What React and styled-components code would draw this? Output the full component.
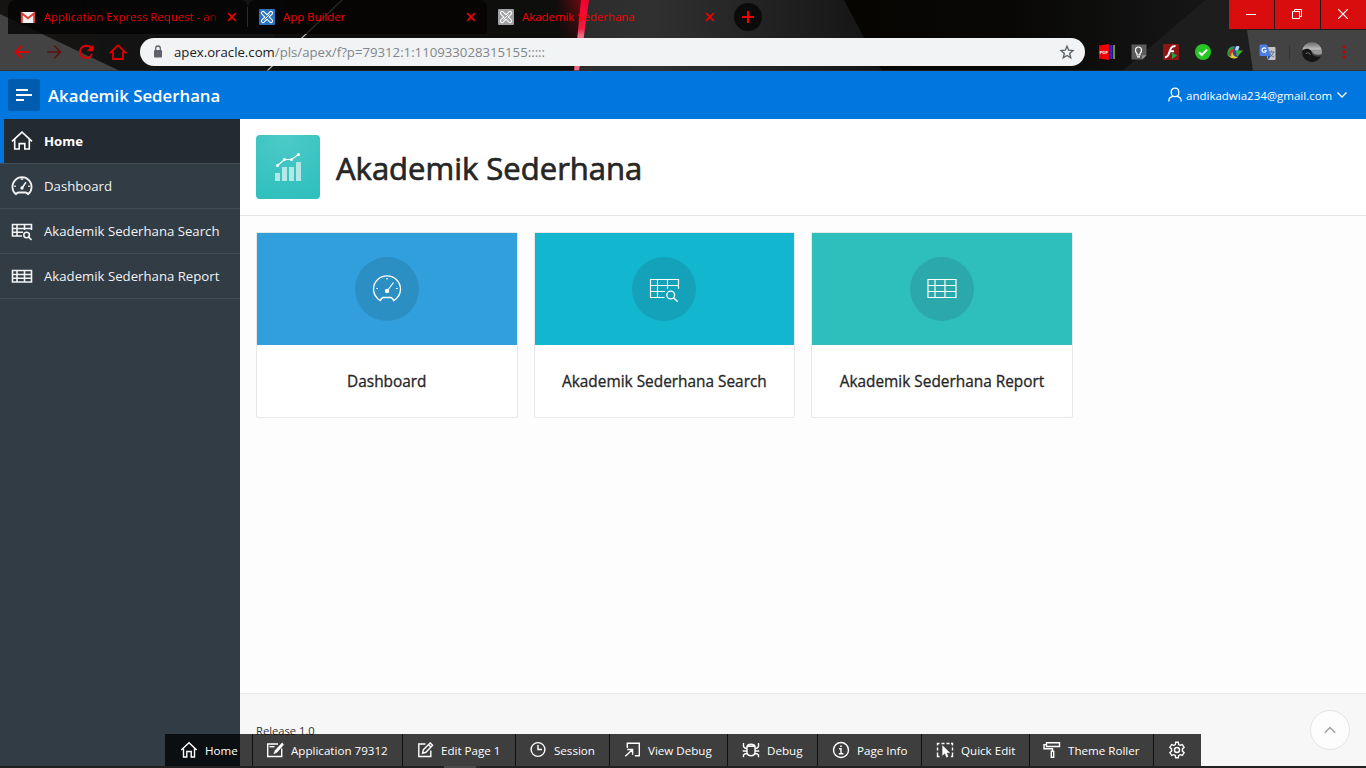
import React from "react";
import styled, { createGlobalStyle } from "styled-components";

const GlobalStyle = createGlobalStyle`
  *, *::before, *::after { box-sizing: border-box; }
  html, body { margin: 0; padding: 0; overflow: hidden; background: #fdfdfd; }
  body { font-family: "Segoe UI", "Open Sans", "Noto Sans", sans-serif; color: #262626; }
  svg { display: block; flex: none; }
`;

const Screen = styled.div`
  position: relative;
  width: 1366px;
  height: 768px;
  display: flex;
  flex-direction: column;
  overflow: hidden;
`;

/* ---------- browser chrome ---------- */

const Chrome = styled.div`
  position: relative;
  z-index: 0;
  height: 71px;
  flex: none;
  display: flex;
  flex-direction: column;
  background: #111;
`;

const Backdrop = styled.svg`
  position: absolute;
  inset: 0;
  z-index: -1;
`;

const TabStrip = styled.div`
  height: 34px;
  display: flex;
  padding-left: 8px;
`;

const Tab = styled.div`
  width: ${(p) => p.$width}px;
  height: 34px;
  display: flex;
  align-items: center;
  padding: 0 11px 0 ${(p) => p.$inset ?? 12}px;
  border-radius: 8px 8px 0 0;
  background: ${(p) => (p.$active ? "transparent" : "rgba(4, 3, 2, 0.78)")};
`;

const TabTitle = styled.span`
  flex: 1;
  margin-left: 8px;
  overflow: hidden;
  white-space: nowrap;
  font-size: 11.4px;
  line-height: 16px;
  color: #f40000;
  mask-image: ${(p) => (p.$fade ? "linear-gradient(90deg, #000 87%, transparent 99%)" : "none")};
`;

const TabDivider = styled.i`
  width: 1px;
  height: 20px;
  margin: 7px 0 0 -1px;
  background: #7a0b0b;
`;

const NewTab = styled.div`
  width: 28px;
  height: 28px;
  margin: 3px 0 0 8px;
  border-radius: 50%;
  background: #0b0b0b;
  display: grid;
  place-items: center;
`;

const WindowButtons = styled.div`
  margin-left: auto;
  display: flex;
  gap: 1px;
`;

const WindowButton = styled.div`
  width: 45px;
  height: 29px;
  padding: 0 2px 1px 0;
  background: #d90d0d;
  display: grid;
  place-items: center;
`;

const BrowserBar = styled.div`
  height: 37px;
  padding: 0 0 1px 6px;
  display: flex;
  align-items: center;
`;

const BarSlot = styled.div`
  width: 32px;
  height: 32px;
  display: grid;
  place-items: center;
`;

const BarDivider = styled.i`
  width: 1px;
  height: 15px;
  margin: 0 6px;
  background: #6b1c1c;
`;

const AddressBox = styled.div`
  width: 945px;
  height: 28px;
  margin: 0 6px;
  padding: 0 10px 0 12px;
  border-radius: 14px;
  background: #f1f3f4;
  display: flex;
  align-items: center;
`;

const Address = styled.span`
  flex: 1;
  margin-left: 10px;
  font-size: 13.2px;
  line-height: 20px;
  color: #80868b;
  b { font-weight: 400; color: #202124; }
`;

/* ---------- application header ---------- */

const AppHeader = styled.header`
  height: 48px;
  flex: none;
  display: flex;
  align-items: center;
  padding: 0 18px 0 8px;
  background: #0076df;
  color: #fff;
`;

const MenuButton = styled.div`
  width: 32px;
  height: 32px;
  border-radius: 2px;
  background: #005cae;
  display: grid;
  place-items: center;
`;

const AppName = styled.div`
  margin-left: 8px;
  padding-top: 1px;
  font-size: 16.8px;
  font-weight: 600;
  line-height: 24px;
  white-space: nowrap;
`;

const UserMenu = styled.div`
  margin-left: auto;
  display: flex;
  align-items: center;
  font-size: 11.5px;
  line-height: 16px;
  span { width: 153px; padding: 1px 0 0 3px; white-space: nowrap; }
`;

/* ---------- body ---------- */

const Body = styled.div`
  flex: 1;
  min-height: 0;
  display: flex;
`;

const SideNav = styled.nav`
  width: 240px;
  flex: none;
  background: #323c45;
`;

const NavItem = styled.div`
  height: 45px;
  display: flex;
  align-items: center;
  gap: 10px;
  padding-left: 10px;
  border-bottom: 1px solid #434d56;
  background: ${(p) => (p.$current ? "#232a31" : "transparent")};
  box-shadow: ${(p) => (p.$current ? "inset 4px 0 0 #0076df" : "none")};
  color: ${(p) => (p.$current ? "#fff" : "#f2f3f4")};
  font-size: 13.2px;
  font-weight: ${(p) => (p.$current ? 700 : 400)};
  line-height: 20px;
  white-space: nowrap;
`;

const Main = styled.main`
  flex: 1;
  display: flex;
  flex-direction: column;
  background: #fdfdfd;
`;

const Hero = styled.section`
  height: 97px;
  display: flex;
  align-items: flex-start;
  gap: 16px;
  padding: 16px;
  background: #fff;
  border-bottom: 1px solid #e4e4e4;
`;

const HeroIcon = styled.div`
  width: 64px;
  height: 64px;
  border-radius: 4px;
  background: radial-gradient(circle at 45% 0, #4dcac8, #2dbfbc 100%);
  display: grid;
  place-items: center;
`;

const HeroTitle = styled.h1`
  margin: 11px 0 0;
  font-size: 31px;
  font-weight: 400;
  line-height: 44px;
  white-space: nowrap;
  color: #262626;
  -webkit-text-stroke: 0.7px #262626;
`;

const Cards = styled.section`
  flex: 1;
  display: grid;
  grid-template-columns: repeat(3, 261.6px);
  gap: 16px;
  align-content: start;
  padding: 16px;
`;

const Card = styled.article`
  height: 186px;
  border: 1px solid #e8e8e8;
  border-radius: 2px;
  background: #fff;
`;

const CardTop = styled.div`
  height: 112px;
  display: grid;
  place-items: center;
  background: ${(p) => p.$color};
`;

const CardDisc = styled.div`
  width: 64px;
  height: 64px;
  border-radius: 50%;
  background: rgba(31, 64, 83, 0.17);
  display: grid;
  place-items: center;
`;

const CardTitle = styled.h3`
  margin: 25px 0 0;
  font-size: 15.4px;
  font-weight: 400;
  line-height: 24px;
  text-align: center;
  white-space: nowrap;
  -webkit-text-stroke: 0.3px #262626;
`;

const Footer = styled.footer`
  height: 75px;
  padding: 29px 16px 0;
  border-top: 1px solid #e6e6e6;
  background: #f7f7f7;
  font-size: 11.2px;
  line-height: 16px;
  color: #333;
`;

const BackToTop = styled.div`
  position: absolute;
  left: 1310px;
  top: 710px;
  width: 40px;
  height: 40px;
  border: 1px solid #e4e4e4;
  border-radius: 50%;
  background: #fdfdfd;
  display: grid;
  place-items: center;
`;

const DevToolbar = styled.div`
  position: absolute;
  left: 165px;
  top: 734px;
  height: 32px;
  display: flex;
  background: rgba(0, 0, 0, 0.75);
`;

const DevItem = styled.div`
  width: ${(p) => p.$width}px;
  height: 32px;
  display: flex;
  align-items: center;
  padding-left: ${(p) => p.$inset ?? 12}px;
  gap: 6px;
  border-right: 1px solid #101010;
  color: #fff;
  font-size: 11.6px;
  line-height: 16px;
  white-space: nowrap;
  &:last-child { border-right: 0; }
  span { padding-top: 1px; }
`;

const TaskbarEdge = styled.div`
  position: absolute;
  left: 0;
  bottom: 0;
  width: 1366px;
  height: 2px;
  background: linear-gradient(90deg, #202020 444px, #4a4a4a 444px 476px, #2c2c2c 476px 480px, #202020 480px);
`;

/* ---------- icons ---------- */

const NavIcon = ({ children }) => (
  <svg width="24" height="24" viewBox="0 0 24 24" fill="none" stroke="currentColor" strokeWidth="1.600">
    {children}
  </svg>
);

const CardIcon = ({ children }) => (
  <svg width="32" height="32" viewBox="0 0 32 32" fill="none" stroke="#fff" strokeWidth="1.150">
    {children}
  </svg>
);

const navGlyphs = {
  home: <path d="M2 12.300 12 3.200l10 9.100M4.700 10.500v9.500h4.500v-5.400h5.600v5.400h4.500v-9.500" />,
  gauge: (
    <>
      <path d="M6 20.300A9.600 9.600 0 1 1 18 20.300Q17 18.600 15.500 18.500h-7Q7 18.600 6 20.300z" strokeWidth="1.800" strokeLinejoin="round" />
      <path d="M12.200 13.800 16 8.300M10.800 5h2.400M4.300 12.200h1.500M18.200 12.200h1.500" />
      <circle cx="12" cy="14" r="1.700" fill="currentColor" stroke="none" />
    </>
  ),
  search: (
    <>
      <path d="M12 17H2.500V5.500h19v5.500M2.500 9.500h19M2.500 13.300h10.500M7 5.500V17M14.500 5.500V11" />
      <circle cx="16.600" cy="16" r="2.800" />
      <path d="m18.600 18 3 3" />
    </>
  ),
  table: <path d="M2.500 6.500h19v11.500h-19zM2.500 10.500h19M2.500 14.300h19M7 6.500V18M14.500 6.500V18" />,
};

const cardGlyphs = {
  gauge: (
    <>
      <path d="M9.300 27.700C4.500 24.500 2.500 21 2.500 16.300A13.500 13.500 0 0 1 29.500 16.300C29.500 21 27.500 24.500 22.700 27.700Q21.800 25 20 24.500H12Q10.200 25 9.300 27.700z" strokeWidth="1.300" strokeLinejoin="round" />
      <path d="M16.500 17.500 22.500 9.500M15 5.700h2M5.300 15.500H7M25 15.500h1.700" />
      <circle cx="16" cy="18" r="2.200" fill="#fff" stroke="none" />
    </>
  ),
  search: (
    <>
      <path d="M16.500 24.500h-14v-18h28v9.300M2.500 12.500h28M2.500 18.500h14.500M9.500 6.500v18M19.500 6.500v9.300" />
      <circle cx="22.700" cy="22" r="3.900" strokeWidth="1.300" />
      <path d="m25.500 24.800 4.300 4" strokeWidth="1.400" />
    </>
  ),
  table: <path d="M2 6.500h28v18H2zM2 12.500h28M2 18.500h28M9 6.500v18M19 6.500v18" />,
};

const CloseIcon = () => (
  <svg width="10" height="10" viewBox="0 0 10 10" stroke="#f00000" strokeWidth="1.700">
    <path d="m1.200 1.200 7.600 7.600M8.800 1.200 1.200 8.800" />
  </svg>
);

const GmailIcon = () => (
  <svg width="16" height="16" viewBox="0 0 16 16">
    <path d="M1 3h14v11H1z" fill="#f1f1f1" />
    <path d="M1.800 14V4.300L8 9.200l6.200-4.900V14" fill="none" stroke="#d64035" strokeWidth="2" />
  </svg>
);

const ApexIcon = ({ color }) => (
  <svg width="16" height="16" viewBox="0 0 16 16">
    <rect width="16" height="16" rx="1" fill={color} />
    <path d="m4 4 8 8M12 4l-8 8" stroke="#fff" strokeWidth="4.200" strokeLinecap="round" />
    <path d="m4 4 8 8M12 4l-8 8" stroke={color} strokeWidth="2" strokeLinecap="round" />
    <path d="m5.500 10.500 5-5" stroke="#fff" strokeWidth="1" />
  </svg>
);

const ChromeBackdrop = () => (
  <Backdrop width="1366" height="71" viewBox="0 0 1366 71">
    <defs>
      <linearGradient id="glow" x1="0" x2="1" y1="0" y2="0">
        <stop offset="0" stopColor="#a00010" stopOpacity="0" />
        <stop offset="1" stopColor="#a80d14" stopOpacity="0.7" />
      </linearGradient>
      <linearGradient id="glowFade" x1="0" x2="0" y1="0" y2="1">
        <stop offset="0" stopColor="#fff" />
        <stop offset="0.600" stopColor="#222" />
        <stop offset="1" stopColor="#000" />
      </linearGradient>
      <mask id="glowMask"><rect x="540" width="60" height="71" fill="url(#glowFade)" /></mask>
      <linearGradient id="slate" x1="0" x2="1" y1="0" y2="0">
        <stop offset="0" stopColor="#2c2c2c" />
        <stop offset="0.250" stopColor="#303030" />
        <stop offset="1" stopColor="#141414" />
      </linearGradient>
      <linearGradient id="shade" x1="0" x2="1" y1="0" y2="0">
        <stop offset="0" stopColor="#070502" />
        <stop offset="0.450" stopColor="#080706" />
        <stop offset="1" stopColor="#161616" />
      </linearGradient>
      <linearGradient id="beam" x1="0" x2="0" y1="0" y2="1">
        <stop offset="0" stopColor="#f4002d" />
        <stop offset="0.400" stopColor="#f01c40" />
        <stop offset="0.500" stopColor="#f16a80" />
        <stop offset="1" stopColor="#f16a80" />
      </linearGradient>
    </defs>
    <path d="M0 0h1366v71H0z" fill="#0e0e0d" />
    <path d="M0 0h80l40 71H0z" fill="#151413" />
    <path d="M85 0h200l-20 71H108z" fill="#141313" />
    <path d="M0 14 120 71H0z" fill="#434343" />
    <path d="M588 0h256l38 71H576z" fill="url(#slate)" />
    <path d="M844 0h361l-83 71H882z" fill="url(#shade)" />
    <path d="M1205 0h161v71h-244z" fill="#1d1d1d" />
    <path d="M1247 30h119v41h-113z" fill="#434343" />
    <path d="m342 0-75 71" stroke="#b5b5b5" strokeWidth="1.200" />
    <path d="M556 0h28l-7 71h-16z" fill="url(#glow)" mask="url(#glowMask)" />
    <path d="M581 0h8l-10 71h-5z" fill="url(#beam)" />
    <path d="M0 70.500h1366" stroke="#2a2a2a" opacity="0.600" />
  </Backdrop>
);

const ExtensionIcons = () => (
  <>
    <BarSlot>
      <svg width="16" height="16" viewBox="0 0 16 16">
        <path d="M0 1.500 10 0v16L0 14.500z" fill="#f40000" />
        <path d="M11 1h2.500v14H11z" fill="#3320d8" />
        <path d="M14 1h2v14h-2z" fill="#6b8f24" />
        <text x="0.700" y="9.800" fontSize="4.200" fontWeight="700" fill="#fff" fontFamily="Liberation Sans, sans-serif">PDF</text>
      </svg>
    </BarSlot>
    <BarSlot>
      <svg width="16" height="16" viewBox="0 0 16 16">
        <path d="M.5.500h15v10.700l-4.300 4.300H.5z" fill="#5c5c5c" />
        <path d="M11.200 15.500v-4.300h4.300z" fill="#999" />
        <path d="M6 9.500C3.300 7 4.400 3 7.500 3S11.700 7 9 9.500V11H6zM6 12.800h3" fill="none" stroke="#fff" strokeWidth="1.200" />
      </svg>
    </BarSlot>
    <BarSlot>
      <svg width="16" height="16" viewBox="0 0 16 16">
        <rect width="16" height="16" rx="1" fill="#8f1414" />
        <path d="M12.500 2C8 2 7.500 5 6.300 8.500 5.400 11.500 4.700 13 2 13.400M6 7.300h5" fill="none" stroke="#fff" strokeWidth="2.100" />
        <path d="m9 8.500 5 3-5 3.500z" fill="#23a34c" />
      </svg>
    </BarSlot>
    <BarSlot>
      <svg width="16" height="16" viewBox="0 0 16 16">
        <circle cx="8" cy="8" r="8" fill="#26c425" />
        <path d="m4 8.200 2.800 2.800L12 5.600" fill="none" stroke="#fff" strokeWidth="2" />
      </svg>
    </BarSlot>
    <BarSlot>
      <svg width="16" height="16" viewBox="0 0 16 16">
        <circle cx="7" cy="8" r="6" fill="#2b4f9c" />
        <path d="M1 12.500C-1 7 2 2.500 7 2.500l-1 3C3.500 6 3 9 4.500 11z" fill="#2e9a3b" />
        <path d="M2.500 11.500C1.500 8 3.500 5 7 4.500L6.500 7C5 8 5 10 6.500 11.500z" fill="#d8302a" />
        <path d="M1.500 11.500c2 3.500 6.500 4 9.500 1.500-3 0-5.500-2-5.500-5C4 9 4.500 11 4 12.500z" fill="#e9c52c" />
        <path d="M9 2.500c1.500-1 3-.5 3.500.5l-2 4-2.500-1z" fill="#b8d9ef" />
        <path d="M8.500 6.500h7.500l-6 6.500-.5-3.500z" fill="#43b02d" />
      </svg>
    </BarSlot>
    <BarSlot>
      <svg width="17" height="17" viewBox="0 0 17 17">
        <path d="M5 3h10.500q1 0 1 1v11q0 1-1 1H9z" fill="#c6c6c6" />
        <path d="M9.500 8h6M12.500 6.500V8M14.500 8c-.5 2.500-2 4-4 5M11 9c.6 2 2 3.300 4 4.200" stroke="#5f7991" fill="none" />
        <path d="M1.500.5H8l4 11.500H1.500q-1 0-1-1v-9.500q0-1 1-1z" fill="#4a7fe5" />
        <path d="m8.500 12 3 0-2 4z" fill="#2b53b5" />
        <path d="M7 4.800a2.200 2.200 0 1 0 .3 2H5.300" fill="none" stroke="#fff" strokeWidth="1.100" />
      </svg>
    </BarSlot>
  </>
);

const Avatar = () => (
  <svg width="20" height="20" viewBox="0 0 20 20">
    <defs>
      <clipPath id="round"><circle cx="10" cy="10" r="10" /></clipPath>
      <linearGradient id="sky" x1="0" x2="0" y1="0" y2="1">
        <stop offset="0" stopColor="#666" />
        <stop offset="0.350" stopColor="#bbb" />
        <stop offset="0.550" stopColor="#555" />
        <stop offset="1" stopColor="#111" />
      </linearGradient>
    </defs>
    <g clipPath="url(#round)">
      <path d="M0 0h20v20H0z" fill="url(#sky)" />
      <path d="M0 8.500c6-4 10-.5 10 3 1 3.500 5 3.500 9 3l-4 6H0z" fill="#151515" />
      <path d="M10 9.500c3-1.500 7-1 10-1.500v4c-4 1.500-8 1-10-2.500z" fill="#999" />
      <path d="M3.500 12c1.500-2 4-1.500 5 1" stroke="#777" fill="none" />
    </g>
  </svg>
);

const DevIcon = ({ children }) => (
  <svg width="20" height="20" viewBox="0 0 20 20" fill="none" stroke="currentColor" strokeWidth="1.400">
    {children}
  </svg>
);

const devIcons = {
  home: <path d="m2.300 10 7.700-7.300 7.700 7.300M4.500 8.700V17h3.300v-5.500h4.400V17h3.300V8.700" />,
  application: (
    <>
      <path d="M13 4H2.700v12.500h14V8.500" />
      <path d="m17.300 2.700-7 7.600-1.500 3.500 3.300-1.600 6.600-7.600" fill="currentColor" strokeWidth="0.600" />
      <path d="M4.500 6.700h5" />
    </>
  ),
  edit: (
    <>
      <path d="M10.500 4H3.800v12.500h12V10.500" />
      <path d="m7.600 13.200.8-3.500 6.800-6.800 2.400 2.400-6.700 7zM13.500 4.700l2.400 2.400" />
    </>
  ),
  session: (
    <>
      <circle cx="10" cy="9.500" r="6.900" />
      <path d="M10 5v4.500h4" />
    </>
  ),
  view: <path d="M5.300 8V3.300h12v12.400h-4.500M3.300 16.200l7-6.500M5.300 9.500h5.300v5.300" />,
  bug: (
    <>
      <path d="M6 6.300c1-2.700 7-2.700 8 0v6.500c-1 4-7 4-8 0zM6 6.300h8" />
      <path d="M6 8.200H4L2.500 6.500V3M14 8.200h2l1.500-1.700V3M6 11H1.700M14 11h4.300M6 13.700H4L2.500 15v2.300M14 13.700h2l1.500 1.300v2.300" />
    </>
  ),
  info: (
    <>
      <circle cx="10" cy="10" r="7.500" />
      <path d="M8 8.700h2v4.800M7.800 13.700h4.600M9.200 6.300h1.500" />
    </>
  ),
  quick: (
    <>
      <path d="M2.500 5.500v-2h2M6.500 3.500h3M11.500 3.500h3M16 3.500h1.500v2M17.500 7.500v3M17.500 12.500v4H16M2.500 7.500v3M2.500 12.500v4h2" />
      <path d="M7.500 5.500v10l2.400-2.200 1.600 4 1.700-.7-1.600-3.900h3.200z" fill="currentColor" strokeWidth="0.300" />
    </>
  ),
  roller: (
    <>
      <path d="M4.500 2.700h13v3.800h-13zM4.500 4.600H2v4.200h8.500v2.500" />
      <path d="M9.300 11.300h2.400v6H9.300z" />
    </>
  ),
  gear: (
    <>
      <path d="m8.700 2.300-.4 2.200-1.500.8-2.100-.8-1.800 2.900 1.700 1.500v2.200l-1.700 1.500 1.800 2.900 2.100-.8 1.500.8.4 2.200h2.600l.4-2.200 1.500-.8 2.100.8 1.800-2.900-1.700-1.500V8.900l1.700-1.500-1.800-2.900-2.100.8-1.500-.8-.4-2.200z" />
      <circle cx="10" cy="10" r="2.500" />
    </>
  ),
};

const devItems = [
  { icon: "home", label: "Home", width: 88, inset: 14 },
  { icon: "application", label: "Application 79312", width: 150 },
  { icon: "edit", label: "Edit Page 1", width: 113 },
  { icon: "session", label: "Session", width: 94 },
  { icon: "view", label: "View Debug", width: 118 },
  { icon: "bug", label: "Debug", width: 90, inset: 13 },
  { icon: "info", label: "Page Info", width: 104, inset: 13 },
  { icon: "quick", label: "Quick Edit", width: 108, inset: 13 },
  { icon: "roller", label: "Theme Roller", width: 124 },
  { icon: "gear", label: "", width: 47, inset: 13 },
];

const navItems = [
  { label: "Home", glyph: "home", current: true },
  { label: "Dashboard", glyph: "gauge" },
  { label: "Akademik Sederhana Search", glyph: "search" },
  { label: "Akademik Sederhana Report", glyph: "table" },
];

const cards = [
  { label: "Dashboard", color: "#309fdb", glyph: "gauge" },
  { label: "Akademik Sederhana Search", color: "#13b6cf", glyph: "search" },
  { label: "Akademik Sederhana Report", color: "#2ebfbc", glyph: "table" },
];

export default function App() {
  return (
    <Screen>
      <GlobalStyle />
      <Chrome>
        <ChromeBackdrop />
        <TabStrip>
          <Tab $width={240}>
            <GmailIcon />
            <TabTitle $fade>Application Express Request - an</TabTitle>
            <CloseIcon />
          </Tab>
          <TabDivider />
          <Tab $width={239} $inset={11}>
            <ApexIcon color="#2b74bd" />
            <TabTitle>App Builder</TabTitle>
            <CloseIcon />
          </Tab>
          <Tab $width={239} $inset={11} $active>
            <ApexIcon color="#9da1a4" />
            <TabTitle>Akademik Sederhana</TabTitle>
            <CloseIcon />
          </Tab>
          <NewTab>
            <svg width="12" height="12" viewBox="0 0 12 12" stroke="#f40000" strokeWidth="2"><path d="M6 0v12M0 6h12" /></svg>
          </NewTab>
          <WindowButtons>
            <WindowButton>
              <svg width="10" height="10" viewBox="0 0 10 10" stroke="#fff"><path d="M0 5.500h10" /></svg>
            </WindowButton>
            <WindowButton>
              <svg width="10" height="10" viewBox="0 0 10 10" stroke="#fff" fill="none"><path d="M.5 2.500h7v7h-7zM2.500 2.500v-2h7v7h-2" /></svg>
            </WindowButton>
            <WindowButton>
              <svg width="10" height="10" viewBox="0 0 10 10" stroke="#fff" strokeWidth="1.200"><path d="m0 0 10 10M10 0 0 10" /></svg>
            </WindowButton>
          </WindowButtons>
        </TabStrip>
        <BrowserBar>
          <BarSlot>
            <svg width="16" height="16" viewBox="0 0 16 16" fill="none" stroke="#d00" strokeWidth="1.800"><path d="M15 8H2M8 1.500 1.500 8 8 14.500" /></svg>
          </BarSlot>
          <BarSlot>
            <svg width="16" height="16" viewBox="0 0 16 16" fill="none" stroke="#5e1010" strokeWidth="1.600"><path d="M1 8h13M8 1.500 14.500 8 8 14.500" /></svg>
          </BarSlot>
          <BarSlot>
            <svg width="16" height="16" viewBox="0 0 16 16" fill="none" stroke="#d00" strokeWidth="2"><path d="M13.200 4.200A6.200 6.200 0 1 0 14 10" /><path d="M15 .8v6.400H8.600z" fill="#d00" stroke="none" /></svg>
          </BarSlot>
          <BarSlot>
            <svg width="18" height="18" viewBox="0 0 18 18" fill="none" stroke="#d00" strokeWidth="1.800"><path d="M4 16V9.300H1.800L9 2.200l7.200 7.100H14V16z" /></svg>
          </BarSlot>
          <AddressBox>
            <svg width="12" height="14" viewBox="0 0 12 14"><rect x="2" y="5" width="8" height="7.500" rx="1" fill="#5f6368" /><path d="M3.700 5V3.300a2.300 2.300 0 0 1 4.600 0V5" fill="none" stroke="#5f6368" strokeWidth="1.300" /></svg>
            <Address><b>apex.oracle.com</b>/pls/apex/f?p=79312:1:110933028315155:::::</Address>
            <svg width="16" height="16" viewBox="0 0 16 16" fill="none" stroke="#5f6368" strokeWidth="1.400"><path d="m8 2.200 1.700 4 4.300.4-3.300 2.900 1 4.300L8 11.500l-3.700 2.300 1-4.300L2 6.600l4.300-.4z" /></svg>
          </AddressBox>
          <ExtensionIcons />
          <BarDivider />
          <BarSlot><Avatar /></BarSlot>
          <BarSlot>
            <svg width="4" height="14" viewBox="0 0 4 14" fill="#c40000"><circle cx="2" cy="2" r="1.500" /><circle cx="2" cy="7" r="1.500" /><circle cx="2" cy="12" r="1.500" /></svg>
          </BarSlot>
        </BrowserBar>
      </Chrome>

      <AppHeader>
        <MenuButton>
          <svg width="16" height="12" viewBox="0 0 16 12" stroke="#fff" strokeWidth="2"><path d="M0 1h12M0 6h16M0 11h8" /></svg>
        </MenuButton>
        <AppName>Akademik Sederhana</AppName>
        <UserMenu>
          <svg width="16" height="16" viewBox="0 0 16 16" fill="none" stroke="#fff" strokeWidth="1.300"><path d="M4.200 5.200C4.200 2.600 5.700 1.200 8 1.200s3.800 1.400 3.800 4S10.300 9.700 8 9.700 4.200 7.800 4.200 5.200zM6 9.200l-3.200 1.600q-1 .5-1 3.700M10 9.200l3.200 1.600q1 .5 1 3.700" /></svg>
          <span>andikadwia234@gmail.com</span>
          <svg width="12" height="12" viewBox="0 0 12 12" fill="none" stroke="#fff" strokeWidth="1.300"><path d="m1.500 3.500 4.500 4.500 4.500-4.500" /></svg>
        </UserMenu>
      </AppHeader>

      <Body>
        <SideNav>
          {navItems.map(({ label, glyph, current }) => (
            <NavItem key={label} $current={current}>
              <NavIcon>{navGlyphs[glyph]}</NavIcon>
              {label}
            </NavItem>
          ))}
        </SideNav>
        <Main>
          <Hero>
            <HeroIcon>
              <svg width="32" height="32" viewBox="0 0 32 32">
                <path d="M3 22h5v8H3zM10 16h5v14h-5zM17 16h5v14h-5zM24 11h5v19h-5z" fill="#b4e8e6" />
                <path d="m5.500 14.500 7-6h7l7-5" fill="none" stroke="#fff" strokeWidth="1.200" />
                <g fill="#fff"><circle cx="5.500" cy="14.500" r="1.500" /><circle cx="12.500" cy="8.500" r="1.500" /><circle cx="19.500" cy="8.500" r="1.500" /><circle cx="26.500" cy="3.500" r="1.500" /></g>
              </svg>
            </HeroIcon>
            <HeroTitle>Akademik Sederhana</HeroTitle>
          </Hero>
          <Cards>
            {cards.map(({ label, color, glyph }) => (
              <Card key={label}>
                <CardTop $color={color}>
                  <CardDisc><CardIcon>{cardGlyphs[glyph]}</CardIcon></CardDisc>
                </CardTop>
                <CardTitle>{label}</CardTitle>
              </Card>
            ))}
          </Cards>
          <Footer>Release 1.0</Footer>
        </Main>
      </Body>

      <BackToTop>
        <svg width="14" height="14" viewBox="0 0 14 14" fill="none" stroke="#a0a0a0" strokeWidth="1.500"><path d="m1.800 9.700 5.200-5.200 5.200 5.200" /></svg>
      </BackToTop>
      <DevToolbar>
        {devItems.map(({ icon, label, width, inset }) => (
          <DevItem key={icon} $width={width} $inset={inset}>
            <DevIcon>{devIcons[icon]}</DevIcon>
            <span>{label}</span>
          </DevItem>
        ))}
      </DevToolbar>
      <TaskbarEdge />
    </Screen>
  );
}
